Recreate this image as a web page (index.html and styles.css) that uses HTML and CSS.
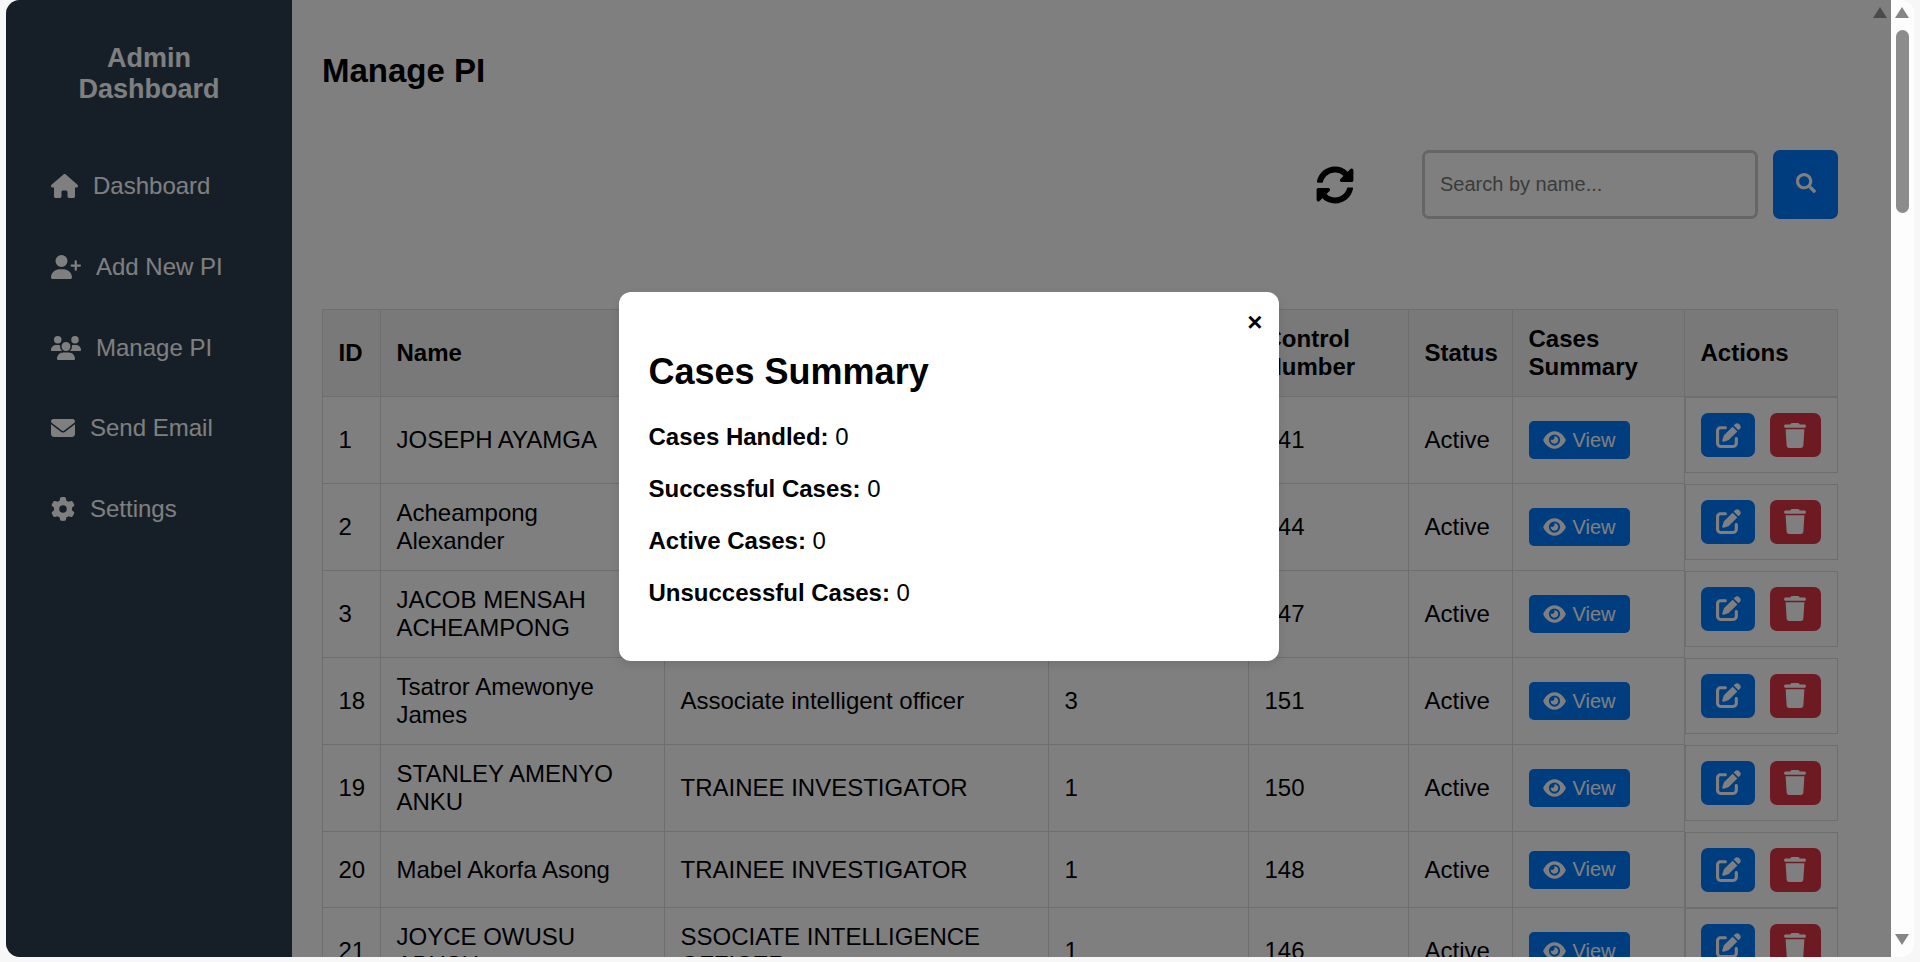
FILE: index.html
```html
<!DOCTYPE html>
<html lang="en">
<head>
    <meta charset="UTF-8">
    <meta name="viewport" content="width=device-width, initial-scale=1.0">
    <title>Manage PI</title>
    <link rel="stylesheet" href="styles.css">
</head>
<body>
    <svg class="icon-defs" xmlns="http://www.w3.org/2000/svg">
        <symbol id="i-home" viewBox="0 0 576 512"><path d="M575.8 255.5c0 18-15 32.1-32 32.1h-32l.7 160.2c0 2.7-.2 5.4-.5 8.1V472c0 22.1-17.9 40-40 40H456c-1.1 0-2.2 0-3.3-.1c-1.4 .1-2.8 .1-4.2 .1H416 392c-22.1 0-40-17.9-40-40V448 384c0-17.7-14.3-32-32-32H256c-17.7 0-32 14.3-32 32v64 24c0 22.1-17.9 40-40 40H160 128.1c-1.5 0-3-.1-4.5-.2c-1.2 .1-2.4 .2-3.6 .2H104c-22.1 0-40-17.9-40-40V360c0-.9 0-1.9 .1-2.8V287.6H32c-18 0-32-14-32-32.1c0-9 3-17 10-24L266.4 8c7-7 15-8 22-8s15 2 21 7L564.8 231.5c8 7 12 15 11 24z"/></symbol>
        <symbol id="i-user-plus" viewBox="0 0 640 512"><path d="M96 128a128 128 0 1 1 256 0A128 128 0 1 1 96 128zM0 482.3C0 383.8 79.8 304 178.3 304h91.4C368.2 304 448 383.8 448 482.3c0 16.4-13.3 29.7-29.7 29.7H29.7C13.3 512 0 498.7 0 482.3zM504 312V248H440c-13.3 0-24-10.7-24-24s10.7-24 24-24h64V136c0-13.3 10.7-24 24-24s24 10.7 24 24v64h64c13.3 0 24 10.7 24 24s-10.7 24-24 24H552v64c0 13.3-10.7 24-24 24s-24-10.7-24-24z"/></symbol>
        <symbol id="i-users" viewBox="0 0 640 512"><path d="M144 0a80 80 0 1 1 0 160A80 80 0 1 1 144 0zM512 0a80 80 0 1 1 0 160A80 80 0 1 1 512 0zM0 298.7C0 239.8 47.8 192 106.7 192h42.7c15.9 0 31 3.5 44.6 9.7c-1.3 7.2-1.9 14.7-1.9 22.3c0 38.2 16.8 72.5 43.3 96c-.2 0-.4 0-.7 0H21.3C9.6 320 0 310.4 0 298.7zM405.3 320c-.2 0-.4 0-.7 0c26.6-23.5 43.3-57.8 43.3-96c0-7.6-.7-15-1.9-22.3c13.6-6.3 28.7-9.7 44.6-9.7h42.7C592.2 192 640 239.8 640 298.7c0 11.8-9.6 21.3-21.3 21.3H405.3zM224 224a96 96 0 1 1 192 0 96 96 0 1 1 -192 0zM128 485.3C128 411.7 187.7 352 261.3 352H378.7C452.3 352 512 411.7 512 485.3c0 14.7-11.9 26.7-26.7 26.7H154.7c-14.7 0-26.7-11.9-26.7-26.7z"/></symbol>
        <symbol id="i-envelope" viewBox="0 0 512 512"><path d="M48 64C21.5 64 0 85.5 0 112c0 15.1 7.1 29.3 19.2 38.4L236.8 313.6c11.4 8.5 27 8.5 38.4 0L492.8 150.4c12.1-9.1 19.2-23.3 19.2-38.4c0-26.5-21.5-48-48-48H48zM0 176V384c0 35.3 28.7 64 64 64H448c35.3 0 64-28.7 64-64V176L294.4 339.2c-22.8 17.1-54 17.1-76.8 0L0 176z"/></symbol>
        <symbol id="i-cog" viewBox="0 0 512 512"><path d="M495.9 166.6c3.2 8.7 .5 18.4-6.4 24.6l-43.3 39.4c1.1 8.3 1.7 16.8 1.7 25.4s-.6 17.1-1.7 25.4l43.3 39.4c6.9 6.2 9.6 15.9 6.4 24.6c-4.4 11.9-9.7 23.3-15.8 34.3l-4.7 8.1c-6.6 11-14 21.4-22.1 31.2c-5.9 7.2-15.7 9.6-24.5 6.8l-55.7-17.7c-13.4 10.3-28.2 18.9-44 25.4l-12.5 57.1c-2 9.1-9 16.3-18.2 17.8c-13.8 2.3-28 3.5-42.5 3.5s-28.7-1.2-42.5-3.5c-9.2-1.5-16.2-8.7-18.2-17.8l-12.5-57.1c-15.8-6.5-30.6-15.1-44-25.4L83.1 425.9c-8.8 2.8-18.6 .3-24.5-6.8c-8.1-9.8-15.5-20.2-22.1-31.2l-4.7-8.1c-6.1-11-11.4-22.4-15.8-34.3c-3.2-8.7-.5-18.4 6.4-24.6l43.3-39.4C64.6 273.1 64 264.6 64 256s.6-17.1 1.7-25.4L22.4 191.2c-6.9-6.2-9.6-15.9-6.4-24.6c4.4-11.9 9.7-23.3 15.8-34.3l4.7-8.1c6.6-11 14-21.4 22.1-31.2c5.9-7.2 15.7-9.6 24.5-6.8l55.7 17.7c13.4-10.3 28.2-18.9 44-25.4l12.5-57.1c2-9.1 9-16.3 18.2-17.8C227.3 1.2 241.5 0 256 0s28.7 1.2 42.5 3.5c9.2 1.5 16.2 8.7 18.2 17.8l12.5 57.1c15.8 6.5 30.6 15.1 44 25.4l55.7-17.7c8.8-2.8 18.6-.3 24.5 6.8c8.1 9.8 15.5 20.2 22.1 31.2l4.7 8.1c6.1 11 11.4 22.4 15.8 34.3zM256 336a80 80 0 1 0 0-160 80 80 0 1 0 0 160z"/></symbol>
        <symbol id="i-sync" viewBox="0 0 512 512"><path d="M370.72 133.28C339.458 104.008 298.888 87.962 255.848 88c-77.458.068-144.328 53.178-162.791 126.85-1.344 5.363-6.122 9.15-11.651 9.15H24.103c-7.498 0-13.194-6.807-11.807-14.176C33.933 94.924 134.813 8 256 8c66.448 0 126.791 26.136 171.315 68.685L463.03 40.97C478.149 25.851 504 36.559 504 57.941V192c0 13.255-10.745 24-24 24H345.941c-21.382 0-32.09-25.851-16.971-40.971l41.75-41.749zM32 296h134.059c21.382 0 32.09 25.851 16.971 40.971l-41.75 41.75c31.262 29.273 71.835 45.319 114.876 45.28 77.418-.07 144.315-53.144 162.787-126.849 1.344-5.363 6.122-9.15 11.651-9.15h57.304c7.498 0 13.194 6.807 11.807 14.176C478.067 417.076 377.187 504 256 504c-66.448 0-126.791-26.136-171.315-68.685L48.97 471.03C33.851 486.149 8 475.441 8 454.059V320c0-13.255 10.745-24 24-24z"/></symbol>
        <symbol id="i-search" viewBox="0 0 512 512"><path d="M505 442.7L405.3 343c-4.5-4.5-10.6-7-17-7H372c27.6-35.3 44-79.7 44-128C416 93.1 322.9 0 208 0S0 93.1 0 208s93.1 208 208 208c48.3 0 92.7-16.4 128-44v16.3c0 6.4 2.5 12.5 7 17l99.7 99.7c9.4 9.4 24.6 9.4 33.9 0l28.3-28.3c9.4-9.4 9.4-24.6.1-34zM208 336c-70.7 0-128-57.2-128-128 0-70.7 57.2-128 128-128 70.7 0 128 57.2 128 128 0 70.7-57.2 128-128 128z"/></symbol>
        <symbol id="i-eye" viewBox="0 0 576 512"><path d="M288 32c-80.8 0-145.5 36.8-192.6 80.6C48.6 156 17.3 208 2.5 243.7c-3.3 7.9-3.3 16.7 0 24.6C17.3 304 48.6 356 95.4 399.4C142.5 443.2 207.2 480 288 480s145.5-36.8 192.6-80.6c46.8-43.5 78.1-95.4 93-131.1c3.3-7.9 3.3-16.7 0-24.6c-14.9-35.7-46.2-87.7-93-131.1C433.5 68.8 368.8 32 288 32zM144 256a144 144 0 1 1 288 0 144 144 0 1 1 -288 0zm144-64c0 35.3-28.7 64-64 64c-7.1 0-13.9-1.2-20.3-3.3c-5.5-1.8-11.9 1.6-11.7 7.4c.3 6.9 1.3 13.8 3.2 20.7c13.7 51.2 66.4 81.6 117.6 67.9s81.6-66.4 67.9-117.6c-11.1-41.5-47.8-69.4-88.6-71.1c-5.8-.2-9.2 6.1-7.4 11.7c2.1 6.4 3.3 13.2 3.3 20.3z"/></symbol>
        <symbol id="i-edit" viewBox="0 0 512 512"><path d="M471.6 21.7c-21.9-21.9-57.3-21.9-79.2 0L362.3 51.7l97.9 97.9 30.1-30.1c21.9-21.9 21.9-57.3 0-79.2L471.6 21.7zm-299.2 220c-6.1 6.1-10.8 13.6-13.5 21.9l-29.6 88.8c-2.9 8.6-.6 18.1 5.8 24.6s15.9 8.7 24.6 5.8l88.8-29.6c8.2-2.7 15.7-7.4 21.9-13.5L437.7 172.3 339.7 74.3 172.4 241.7zM96 64C43 64 0 107 0 160V416c0 53 43 96 96 96H352c53 0 96-43 96-96V320c0-17.7-14.3-32-32-32s-32 14.3-32 32v96c0 17.7-14.3 32-32 32H96c-17.7 0-32-14.3-32-32V160c0-17.7 14.3-32 32-32h96c17.7 0 32-14.3 32-32s-14.3-32-32-32H96z"/></symbol>
        <symbol id="i-trash" viewBox="0 0 448 512"><path d="M135.2 17.7L128 32H32C14.3 32 0 46.3 0 64S14.3 96 32 96H416c17.7 0 32-14.3 32-32s-14.3-32-32-32H320l-7.2-14.3C307.4 6.8 296.3 0 284.2 0H163.8c-12.1 0-23.2 6.8-28.6 17.7zM416 128H32L53.2 467c1.6 25.3 22.6 45 47.9 45H346.9c25.3 0 46.3-19.7 47.9-45L416 128z"/></symbol>
    </svg>

    <div class="window">
        <div class="app">
            <aside class="sidebar">
                <h2>Admin Dashboard</h2>
                <ul class="nav">
                    <li><svg class="nav-icon w-home"><use href="#i-home"/></svg>Dashboard</li>
                    <li><svg class="nav-icon w-wide"><use href="#i-user-plus"/></svg>Add New PI</li>
                    <li><svg class="nav-icon w-wide"><use href="#i-users"/></svg>Manage PI</li>
                    <li><svg class="nav-icon"><use href="#i-envelope"/></svg>Send Email</li>
                    <li><svg class="nav-icon"><use href="#i-cog"/></svg>Settings</li>
                </ul>
            </aside>

            <main class="content">
                <h1>Manage PI</h1>
                <div class="toolbar">
                    <button class="refresh-btn"><svg><use href="#i-sync"/></svg></button>
                    <input type="text" class="search-input" placeholder="Search by name...">
                    <button class="search-btn"><svg><use href="#i-search"/></svg></button>
                </div>

                <table class="pi-table">
                    <colgroup>
                        <col class="c-id"><col class="c-name"><col class="c-position"><col class="c-rank">
                        <col class="c-control"><col class="c-status"><col class="c-summary"><col class="c-actions">
                    </colgroup>
                    <thead>
                        <tr>
                            <th>ID</th><th>Name</th><th>Position</th><th>Rank</th>
                            <th>Control Number</th><th>Status</th><th>Cases Summary</th><th>Actions</th>
                        </tr>
                    </thead>
                    <tbody>
                        <tr>
                            <td>1</td><td>JOSEPH AYAMGA</td><td>PRINCIPAL INTELLIGENCE OFFICER INVESTIGATOR</td><td>3</td><td>141</td><td>Active</td>
                            <td><button class="view-btn"><svg><use href="#i-eye"/></svg>View</button></td>
                            <td class="actions"><button class="edit-btn"><svg><use href="#i-edit"/></svg></button><button class="delete-btn"><svg><use href="#i-trash"/></svg></button></td>
                        </tr>
                        <tr>
                            <td>2</td><td>Acheampong Alexander</td><td>Associate intelligent officer</td><td>3</td><td>144</td><td>Active</td>
                            <td><button class="view-btn"><svg><use href="#i-eye"/></svg>View</button></td>
                            <td class="actions"><button class="edit-btn"><svg><use href="#i-edit"/></svg></button><button class="delete-btn"><svg><use href="#i-trash"/></svg></button></td>
                        </tr>
                        <tr>
                            <td>3</td><td>JACOB MENSAH ACHEAMPONG</td><td>TRAINEE INVESTIGATOR</td><td>1</td><td>147</td><td>Active</td>
                            <td><button class="view-btn"><svg><use href="#i-eye"/></svg>View</button></td>
                            <td class="actions"><button class="edit-btn"><svg><use href="#i-edit"/></svg></button><button class="delete-btn"><svg><use href="#i-trash"/></svg></button></td>
                        </tr>
                        <tr>
                            <td>18</td><td>Tsatror Amewonye James</td><td>Associate intelligent officer</td><td>3</td><td>151</td><td>Active</td>
                            <td><button class="view-btn"><svg><use href="#i-eye"/></svg>View</button></td>
                            <td class="actions"><button class="edit-btn"><svg><use href="#i-edit"/></svg></button><button class="delete-btn"><svg><use href="#i-trash"/></svg></button></td>
                        </tr>
                        <tr>
                            <td>19</td><td>STANLEY AMENYO ANKU</td><td>TRAINEE INVESTIGATOR</td><td>1</td><td>150</td><td>Active</td>
                            <td><button class="view-btn"><svg><use href="#i-eye"/></svg>View</button></td>
                            <td class="actions"><button class="edit-btn"><svg><use href="#i-edit"/></svg></button><button class="delete-btn"><svg><use href="#i-trash"/></svg></button></td>
                        </tr>
                        <tr>
                            <td>20</td><td>Mabel Akorfa Asong</td><td>TRAINEE INVESTIGATOR</td><td>1</td><td>148</td><td>Active</td>
                            <td><button class="view-btn"><svg><use href="#i-eye"/></svg>View</button></td>
                            <td class="actions"><button class="edit-btn"><svg><use href="#i-edit"/></svg></button><button class="delete-btn"><svg><use href="#i-trash"/></svg></button></td>
                        </tr>
                        <tr>
                            <td>21</td><td>JOYCE OWUSU ABUSU</td><td>SSOCIATE INTELLIGENCE OFFICER</td><td>1</td><td>146</td><td>Active</td>
                            <td><button class="view-btn"><svg><use href="#i-eye"/></svg>View</button></td>
                            <td class="actions"><button class="edit-btn"><svg><use href="#i-edit"/></svg></button><button class="delete-btn"><svg><use href="#i-trash"/></svg></button></td>
                        </tr>
                    </tbody>
                </table>
            </main>

            <span class="inner-arrow"></span>

            <div class="modal-overlay">
                <div class="modal">
                    <span class="modal-close">×</span>
                    <h2>Cases Summary</h2>
                    <p><strong>Cases Handled:</strong> 0</p>
                    <p><strong>Successful Cases:</strong> 0</p>
                    <p><strong>Active Cases:</strong> 0</p>
                    <p><strong>Unsuccessful Cases:</strong> 0</p>
                </div>
            </div>
        </div>

        <div class="scrollbar">
            <span class="arrow-up"></span>
            <span class="thumb"></span>
            <span class="arrow-down"></span>
        </div>
    </div>
</body>
</html>
```

FILE: styles.css
```css
* {
    box-sizing: border-box;
    font-family: "Liberation Sans", Arial, sans-serif;
}
body {
    margin: 0;
    height: 962px;
    overflow: hidden;
    background: #f7f7f7;
}
.icon-defs {
    display: none;
}
.window {
    display: flex;
    height: 957px;
    margin-left: 6px;
    margin-right: 6px;
    background: #fff;
    border-radius: 14px;
    overflow: hidden;
}
.app {
    position: relative;
    display: flex;
    flex: 1;
    min-width: 0;
    overflow: hidden;
}

/* sidebar */
.sidebar {
    width: 286px;
    flex-shrink: 0;
    padding: 43px 30px 0 45px;
    background: #2c3e50;
    color: #fff;
}
.sidebar h2 {
    margin: 0 0 41px;
    padding-right: 15px;
    font-size: 27px;
    text-align: center;
}
.nav {
    list-style: none;
    margin: 0;
    padding: 0;
}
.nav li {
    display: flex;
    align-items: center;
    height: 80.7px;
    font-size: 24px;
    white-space: nowrap;
}
.nav-icon {
    width: 24px;
    height: 24px;
    margin-right: 15px;
    fill: #fff;
    flex-shrink: 0;
}
.nav-icon.w-home {
    width: 27px;
}
.nav-icon.w-wide {
    width: 30px;
}

/* main */
.content {
    flex: 1;
    min-width: 0;
    padding: 30px 53px 0 30px;
}
h1 {
    margin: 22px 0 60px;
    font-size: 33px;
    color: #000;
}
.toolbar {
    display: flex;
    justify-content: flex-end;
    align-items: stretch;
    height: 69px;
    margin-bottom: 90px;
}
.refresh-btn {
    align-self: center;
    width: 38px;
    height: 38px;
    margin-right: 68px;
    padding: 0;
    border: none;
    background: none;
}
.refresh-btn svg {
    width: 38px;
    height: 38px;
    fill: #000;
    display: block;
}
.search-input {
    width: 336px;
    padding: 0 15px;
    border: 3px solid #ccc;
    border-radius: 7px;
    font-size: 20px;
}
.search-input::placeholder {
    color: #777;
}
.search-btn {
    width: 65px;
    margin-left: 15px;
    border: none;
    border-radius: 7px;
    background: #007bff;
}
.search-btn svg {
    width: 20px;
    height: 20px;
    fill: #fff;
    display: block;
    margin: 0 auto 3px;
}

/* table */
.pi-table {
    width: 1515px;
    table-layout: fixed;
    border-collapse: collapse;
    font-size: 24px;
    color: #000;
}
.c-id { width: 58px; }
.c-name { width: 284px; }
.c-position { width: 384px; }
.c-rank { width: 200px; }
.c-control { width: 160px; }
.c-status { width: 104px; }
.c-summary { width: 172px; }
.c-actions { width: 153px; }
.pi-table th,
.pi-table td {
    padding: 15px 15.5px;
    border: 1px solid #ddd;
    text-align: left;
}
.pi-table th {
    background: #f2f2f2;
}
.pi-table .actions {
    display: flex;
    gap: 15px;
    padding-left: 15px;
}
.view-btn {
    display: inline-flex;
    align-items: center;
    gap: 7px;
    height: 38px;
    padding: 0 14px;
    border: none;
    border-radius: 5px;
    background: #007bff;
    color: #fff;
    font-size: 20px;
}
.view-btn svg {
    width: 23px;
    height: 20px;
    fill: #fff;
}
.edit-btn,
.delete-btn {
    width: 55px;
    height: 44px;
    padding: 0;
    border: none;
    border-radius: 7px;
    background: #007bff;
}
.edit-btn {
    padding-left: 2px;
}
.delete-btn {
    width: 53px;
    background: #dc3545;
}
.edit-btn svg {
    width: 25px;
    height: 25px;
    fill: #fff;
    display: block;
    margin: auto;
}
.delete-btn svg {
    width: 22px;
    height: 25px;
    fill: #fff;
    display: block;
    margin: auto;
}

/* leftover arrow of the inner scroll area, under the overlay */
.inner-arrow {
    position: absolute;
    top: 7px;
    right: 4px;
    width: 0;
    height: 0;
    border-left: 7px solid transparent;
    border-right: 7px solid transparent;
    border-bottom: 11px solid #949494;
}

/* modal over the page */
.modal-overlay {
    position: absolute;
    inset: 0;
    display: flex;
    justify-content: center;
    align-items: center;
    padding-bottom: 4px;
    background: rgba(0, 0, 0, 0.5);
}
.modal {
    position: relative;
    width: 660px;
    padding: 30px;
    border-radius: 12px;
    background: #fff;
    box-shadow: 0 4px 10px rgba(0, 0, 0, 0.1);
    color: #000;
    font-size: 24px;
}
.modal h2 {
    margin: 29px 0 30px;
    font-size: 36px;
}
.modal p {
    margin: 24px 0;
}
.modal-close {
    position: absolute;
    top: 15px;
    right: 16px;
    font-size: 26px;
    font-weight: bold;
}

/* scrollbar */
.scrollbar {
    position: relative;
    width: 23px;
    flex-shrink: 0;
    background: #fdfdfd;
}
.thumb {
    position: absolute;
    top: 30px;
    left: 5px;
    width: 13px;
    height: 183px;
    border-radius: 7px;
    background: #8c8c8c;
}
.arrow-up,
.arrow-down {
    position: absolute;
    left: 4px;
    width: 0;
    height: 0;
    border-left: 7.5px solid transparent;
    border-right: 7.5px solid transparent;
}
.arrow-up {
    top: 7px;
    border-bottom: 11px solid #858585;
}
.arrow-down {
    bottom: 12px;
    border-top: 11px solid #858585;
}
```
